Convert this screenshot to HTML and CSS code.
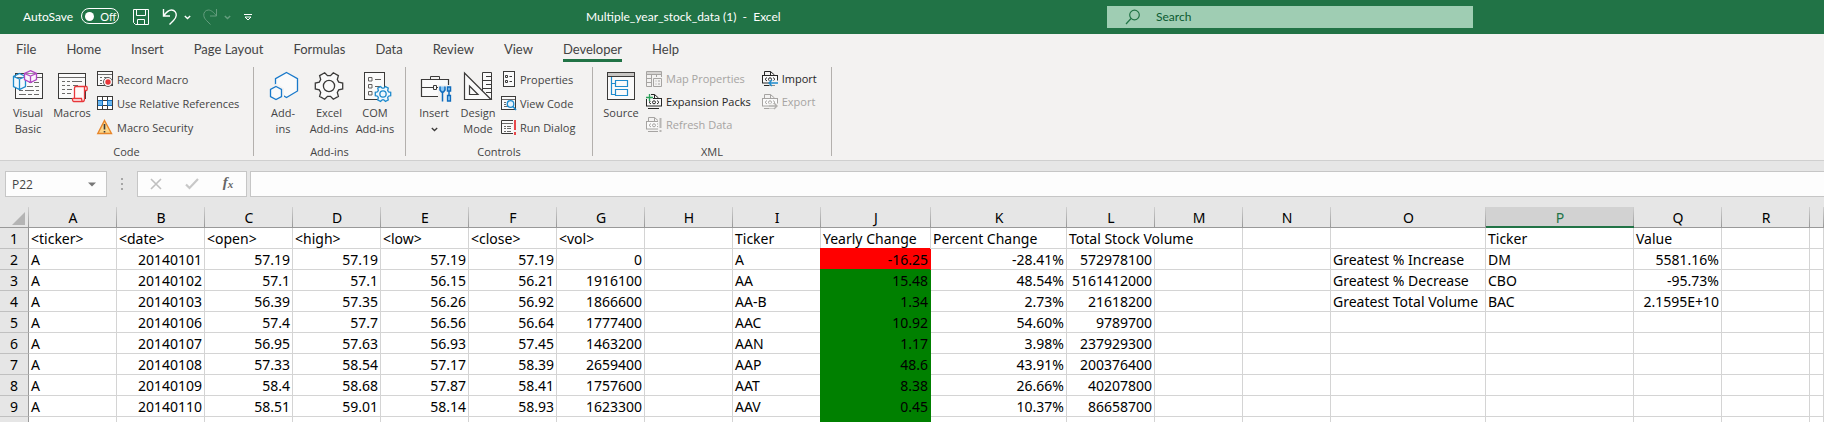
FILE: index.html
```html
<!DOCTYPE html>
<html lang="en">
<head>
<meta charset="utf-8">
<title>Multiple_year_stock_data (1) - Excel</title>
<link rel="stylesheet" href="styles.css">
</head>
<body>
<svg class="defs" aria-hidden="true">
  <symbol id="gear" viewBox="0 0 32 32">
    <path d="M25.7 12.1L29.7 13.1V18.9L25.7 19.9L24.3 22.5L25.4 26.4L20.3 29.3L17.5 26.4H14.5L11.7 29.3L6.6 26.4L7.7 22.5L6.3 19.9L2.3 18.9V13.1L6.3 12.1L7.7 9.5L6.6 5.6L11.7 2.7L14.5 5.6H17.5L20.3 2.7L25.4 5.6L24.3 9.5Z" vector-effect="non-scaling-stroke"/>
    <circle cx="16" cy="16" r="5.6" vector-effect="non-scaling-stroke"/>
  </symbol>
  <symbol id="xmlfile" viewBox="0 0 16 16">
    <path d="M2.5 4V.5H8.500L12.500 4M8.500 .5V4M2 14.500H13" stroke="currentColor" fill="none"/>
    <rect x=".5" y="4.500" width="15" height="7.500" fill="#fafafa" stroke="currentColor"/>
    <path d="M5 6.500L3 8.300L5 10M11 6.500L13 8.300L11 10" stroke="currentColor" fill="none"/>
    <circle cx="8" cy="8.300" r="1.500" stroke="currentColor" fill="none"/>
  </symbol>
</svg>

<header class="titlebar">
  <div class="quick">
    <label class="autosave">AutoSave
      <span class="switch"><input type="checkbox" class="switch-input"><span class="knob"></span>Off</span>
    </label>
    <button class="qbtn save" aria-label="Save"><svg width="16" height="16" viewBox="0 0 16 16"><path d="M.5.5H15.500V15.500H2.500L.5 13.500ZM3.500.5V6.500H12.500V.5M4.500 15.500V10.500H11.500V15.500"/></svg></button>
    <button class="qbtn undo" aria-label="Undo"><svg width="16" height="18" viewBox="0 0 16 18"><path class="bold" d="M1.500 1V8H8M1.500 8C4 4.500 7 2 9.500 2C13 2 14.500 5 14.200 7.500C14 9.500 13 11 11.500 12.500L7.500 16.500"/></svg></button>
    <button class="qbtn undo-more" aria-label="Undo list"><svg width="7" height="5" viewBox="0 0 7 5"><path class="bold" d="M.8 1L3.500 3.500L6.200 1"/></svg></button>
    <button class="qbtn redo dim" aria-label="Redo" disabled><svg width="16" height="18" viewBox="0 0 16 18"><path d="M14.500 1V8H8M14.500 8C12 4.500 9 2 6.500 2C3 2 1.500 5 1.800 7.500C2 9.500 3 11 4.500 12.500L8.500 16.500"/></svg></button>
    <button class="qbtn redo-more dim" aria-label="Redo list" disabled><svg width="7" height="5" viewBox="0 0 7 5"><path class="bold" d="M.8 1L3.500 3.500L6.200 1"/></svg></button>
    <button class="qbtn customize" aria-label="Customize toolbar"><svg width="8" height="7" viewBox="0 0 8 7"><path d="M0 .5H8M1 3L4 6L7 3Z"/></svg></button>
  </div>
  <div class="doc-title">Multiple_year_stock_data (1)&nbsp; -&nbsp; Excel</div>
  <label class="search"><svg width="16" height="16" viewBox="0 0 16 16"><circle cx="9.500" cy="6" r="4.800"/><path d="M6 9.500L1 15"/></svg><input type="text" class="search-input" placeholder="Search" aria-label="Search"></label>
</header>

<nav class="tabs">
  <button class="tab">File</button><button class="tab">Home</button><button class="tab">Insert</button><button class="tab">Page Layout</button><button class="tab">Formulas</button><button class="tab">Data</button><button class="tab">Review</button><button class="tab">View</button><button class="tab active">Developer</button><button class="tab">Help</button>
</nav>

<div class="ribbon">
  <section class="group code">
    <div class="tools">
      <button class="big"><svg width="32" height="32" viewBox="0 0 32 32"><rect x="3.500" y="3.500" width="27" height="25" fill="#fafafa" stroke="#3b3a39"/><path d="M4 7.500H30M17 12.500H20M22 12.500H27M15 16.500H21M23 16.500H27M7 20.500H11M13 20.500H22M24 20.500H27M7 24.500H14M16 24.500H20M22 24.500H27" stroke="#6b6a69"/><path d="M7.500 3.500L13.500 6.500V16.500L7.500 19.500L1.500 16.500V6.500ZM1.500 6.500L7.500 9L13.500 6.500M7.500 9V19" stroke="#1e8bcd" fill="#f3f9fd" stroke-width="1.300"/><path d="M18.500 .7L24.500 3.500V9.500L18.500 12.500L12.500 9.500V3.500ZM12.500 3.500L18.500 6L24.500 3.500M18.500 6V12" stroke="#b146c2" fill="#fbf3fc" stroke-width="1.300"/></svg><span>Visual<br>Basic</span></button>
      <button class="big"><svg width="32" height="32" viewBox="0 0 32 32"><rect x="2.500" y="3.500" width="27" height="25" fill="#fafafa" stroke="#3b3a39"/><path d="M3 7.500H29M6 11.500H9M11 11.500H14M16 11.500H26M6 15.500H9M11 15.500H14M17 15.500H22M6 19.500H9M11 19.500H16M6 23.500H9M11 23.500H15" stroke="#6b6a69"/><path d="M18.500 28.500V18C18.500 17 19 16.500 20 16.500H30.500C31.500 16.500 31.500 20.500 30.500 20.500H28.500V28.500C28.500 30.500 28 31.500 27 31.500H17.500C16.500 31.500 16 28.500 17 28.500H25.500L26 31M28.500 20.500V17" stroke="#e8373a" fill="#fff8f8" stroke-width="1.300"/></svg><span>Macros</span></button>
      <div class="small-col">
        <button class="small"><svg width="16" height="16" viewBox="0 0 16 16"><rect x=".5" y=".5" width="15" height="14" fill="#fafafa" stroke="#3b3a39"/><path d="M1 3.500H15M3 6.500H5M7 6.500H12M3 9.500H5M3 12.500H5" stroke="#6b6a69"/><circle cx="11" cy="11" r="4.500" fill="#fff" stroke="#605e5c"/><circle cx="11" cy="11" r="2.700" fill="#e8373a"/></svg>Record Macro</button>
        <button class="small"><svg width="16" height="16" viewBox="0 0 16 16"><rect x=".5" y="1.500" width="15" height="13" fill="#fff" stroke="#3b3a39"/><path d="M1 6H5V10H1ZM11 6H15V10H11Z" fill="#6cb8f0"/><path d="M1 5.500H15M1 10.500H15M5.500 2V14M10.500 2V14" fill="none" stroke="#3b3a39"/><path d="M1 5.500H5.500V10.500H1M15 5.500H10.500V10.500H15" fill="none" stroke="#0f6cbd"/></svg>Use Relative References</button>
        <button class="small"><svg width="16" height="16" viewBox="0 0 16 16"><path d="M7.500 1.500L14.500 14.500H.8Z" fill="#fbd68a" stroke="#e8862a" stroke-width="1.400"/><path d="M7.500 5V10.500M7.500 12V13.500" stroke="#3b3a39" stroke-width="1.600"/></svg>Macro Security</button>
      </div>
    </div>
    <h2 class="group-name">Code</h2>
  </section>

  <section class="group addins">
    <div class="tools">
      <button class="big"><svg width="32" height="32" viewBox="0 0 32 32"><path d="M19.500 2.500L30.500 8.700V21L19.500 27.500L8.500 21V8.700Z" fill="#fafafa" stroke="#1979ca" stroke-width="1.300"/><path d="M9 16L15 19.500V26.500L9 30L3 26.500V19.500Z" fill="#fafafa" stroke="#f3f2f1" stroke-width="4"/><path d="M9 16.500L14.500 19.500V26.500L9 29.500L3.500 26.500V19.500Z" fill="#fafafa" stroke="#1979ca" stroke-width="1.300"/></svg><span>Add-<br>ins</span></button>
      <button class="big"><svg width="32" height="32" viewBox="0 0 32 32" fill="#fafafa" stroke="#3b3a39" stroke-width="1.300"><use href="#gear" width="32" height="32"/></svg><span>Excel<br>Add-ins</span></button>
      <button class="big"><svg width="32" height="32" viewBox="0 0 32 32"><rect x="5.500" y="2.500" width="20" height="27" fill="#fafafa" stroke="#3b3a39"/><path d="M9.500 7.500H13V11H9.500ZM9.500 14.500H13V18H9.500ZM9.500 21.500H13V25H9.500ZM16 9.500H22M16 16.500H21" fill="none" stroke="#605e5c"/><svg x="15" y="15" width="18" height="18" viewBox="0 0 18 18" fill="#eef7fd" stroke="#1e8bcd" stroke-width="1.300"><use href="#gear" width="18" height="18"/></svg></svg><span>COM<br>Add-ins</span></button>
    </div>
    <h2 class="group-name">Add-ins</h2>
  </section>

  <section class="group controls">
    <div class="tools">
      <button class="big"><svg width="32" height="32" viewBox="0 0 32 32"><path d="M3.500 9.500H30.500V26.500H3.500Z" fill="#fafafa" stroke="#3b3a39" stroke-width="1.200"/><path d="M12.500 9V6.500H21.500V9M4 17.500H15M18 17.500H22M15.500 15.500H18.500V19.500H15.500Z" fill="none" stroke="#3b3a39"/><path d="M20 15H34V32H20Z" fill="#f3f2f1"/><path d="M22 16.500V20L23.500 22H25.500L27 20V16.500M24.500 21.500V31.500M29.500 17H32.500V21H29.500ZM31 21V25" stroke="#0f6cbd" fill="#8cc8f5" stroke-width="1.500"/><path d="M29.500 25.500H32.500V31H29.500Z" fill="#8cc8f5" stroke="#0f6cbd" stroke-width="1.300"/></svg><span>Insert</span><svg class="more" width="7" height="5" viewBox="0 0 7 5"><path d="M.8 1L3.500 3.500L6.200 1" fill="none" stroke="#3b3a39" stroke-width="1.300"/></svg></button>
      <button class="big"><svg width="32" height="32" viewBox="0 0 32 32"><path d="M20.500 2.500H29.500V29.500H20.500ZM24 6.500H29M21 10.500H29M24 14.500H29M21 18.500H29M24 22.500H29" fill="#fafafa" stroke="#3b3a39"/><path d="M2.500 3V29.500H29ZM7.500 16V24.500H16Z" fill="#fafafa" stroke="#3b3a39" stroke-width="1.200"/></svg><span>Design<br>Mode</span></button>
      <div class="small-col">
        <button class="small"><svg width="16" height="16" viewBox="0 0 16 16"><rect x="3.500" y=".5" width="11" height="15" fill="#fafafa" stroke="#3b3a39"/><path d="M5.500 4.500H7.500V6.500H5.500ZM5.500 9.500H7.500V11.500H5.500ZM9.500 5.500H12M9.500 10.500H12" fill="none" stroke="#3b3a39"/></svg>Properties</button>
        <button class="small"><svg width="16" height="16" viewBox="0 0 16 16"><rect x="1.500" y="1.500" width="14" height="13" fill="#fafafa" stroke="#3b3a39"/><path d="M2 4.500H15M4 7.500H6M4 9.500H6M4 11.500H8" stroke="#6b6a69"/><circle cx="10.500" cy="9" r="3.300" fill="#e6f3fc" stroke="#1e8bcd" stroke-width="1.300"/><path d="M13 11.500L16 15" stroke="#1e8bcd" stroke-width="1.600"/></svg>View Code</button>
        <button class="small"><svg width="16" height="16" viewBox="0 0 16 16"><path d="M13 1.500H1.500V14.500H13" fill="#fafafa" stroke="#3b3a39"/><path d="M2 4.500H13M4 7.500H6M7 7.500H11M4 9.500H6M7 9.500H11M4 12.500H6M7 12.500H11" stroke="#6b6a69"/><path d="M15 1V11M15 13V16" stroke="#e8474a" stroke-width="2"/></svg>Run Dialog</button>
      </div>
    </div>
    <h2 class="group-name">Controls</h2>
  </section>

  <section class="group xml">
    <div class="tools">
      <button class="big"><svg width="32" height="32" viewBox="0 0 32 32"><rect x="2.500" y="2.500" width="27" height="27" fill="#fafafa" stroke="#3b3a39"/><path d="M3 3H29V6H3Z" fill="#c8c6c4"/><path d="M3 6.500H29" stroke="#3b3a39"/><path d="M6.500 7V24.500H10.500M6.500 13.500H10.500M10.500 10.500H22.500V16.500H10.500ZM10.500 19.500H22.500V25.500H10.500Z" fill="none" stroke="#1e8bcd" stroke-width="1.200"/></svg><span>Source</span></button>
      <div class="small-col">
        <button class="small" disabled><svg width="16" height="16" viewBox="0 0 16 16" fill="none" stroke="#a6a4a2"><path d="M.5.5H15.500V6M15.500 3.500H.5V15.500H6M.5.5V4M5.500 4V15M10.500 4V6M1 7.500H6M1 11.500H6"/><path d="M1 1H15V3H1Z" fill="#d5d3d1" stroke="none"/><path d="M7.500 7.500H15.500V15.500H7.500ZM9.500 10H10.500M9.500 13H10.500M12 10H14M12 13H14"/></svg>Map Properties</button>
        <button class="small strong"><svg width="16" height="16" viewBox="0 0 16 16"><use href="#xmlfile" width="16" height="16"/><path d="M0 3.500H7M3.500 0V7" stroke="#f3f2f1" stroke-width="3"/><path d="M0 3.500H7M3.500 0V7" stroke="#2ca05a" stroke-width="1.300"/></svg>Expansion Packs</button>
        <button class="small" disabled><svg width="16" height="16" viewBox="0 0 16 16"><use href="#xmlfile" width="16" height="16"/><path d="M14 0V16" stroke="#f3f2f1" stroke-width="4"/><path d="M14.500 1V11M14.500 13V15" stroke="#b8b6b4" stroke-width="2"/></svg>Refresh Data</button>
      </div>
      <div class="small-col">
        <button class="small strong"><svg width="16" height="16" viewBox="0 0 16 16"><use href="#xmlfile" width="16" height="16"/><path d="M7 12H16" stroke="#f3f2f1" stroke-width="5"/><path d="M16 12H7M10 9L7 12L10 15" fill="none" stroke="#1e8bcd" stroke-width="1.400"/></svg>Import</button>
        <button class="small" disabled><svg width="16" height="16" viewBox="0 0 16 16"><use href="#xmlfile" width="16" height="16"/><path d="M7 12H16" stroke="#f3f2f1" stroke-width="5"/><path d="M7 12H15M12 9L15 12L12 15" fill="none" stroke="#b0aeac" stroke-width="1.400"/></svg>Export</button>
      </div>
    </div>
    <h2 class="group-name">XML</h2>
  </section>
</div>

<div class="formula-bar">
  <div class="namebox"><input type="text" class="name-input" value="P22" aria-label="Name box"><button class="name-drop" aria-label="Name list"><svg width="8" height="5" viewBox="0 0 8 5"><path d="M0 .5H8L4 4.500Z" fill="#777"/></svg></button></div>
  <svg class="grip" width="2" height="12" viewBox="0 0 2 12"><path d="M0 1H2M0 6H2M0 11H2" stroke="#a6a6a6" stroke-width="2"/></svg>
  <div class="fx">
    <button aria-label="Cancel"><svg width="12" height="12" viewBox="0 0 12 12"><path d="M1 1L11 11M11 1L1 11" stroke="#c0c0c0" stroke-width="1.600"/></svg></button>
    <button aria-label="Enter"><svg width="14" height="12" viewBox="0 0 14 12"><path d="M1 6.500L4.500 10L13 1" fill="none" stroke="#c8c8c8" stroke-width="2.200"/></svg></button>
    <button class="fx-label" aria-label="Insert function"><i>f</i><i class="sub">x</i></button>
  </div>
  <input type="text" class="formula" aria-label="Formula">
</div>

<main class="sheet">
<table>
<colgroup><col class="c-row"><col class="c" span="9"><col class="c-j"><col class="c-k"><col class="c" span="3"><col class="c-o"><col class="c-p"><col class="c" span="2"><col></colgroup>
<thead>
<tr><th class="corner"><svg width="13" height="13" viewBox="0 0 13 13"><path d="M13 0V13H0Z" fill="#b4b4b4"/></svg></th><th>A</th><th>B</th><th>C</th><th>D</th><th>E</th><th>F</th><th>G</th><th>H</th><th>I</th><th>J</th><th>K</th><th>L</th><th>M</th><th>N</th><th>O</th><th class="current">P</th><th>Q</th><th>R</th><th></th></tr>
</thead>
<tbody>
<tr><th>1</th><td>&lt;ticker&gt;</td><td>&lt;date&gt;</td><td>&lt;open&gt;</td><td>&lt;high&gt;</td><td>&lt;low&gt;</td><td>&lt;close&gt;</td><td>&lt;vol&gt;</td><td></td><td>Ticker</td><td>Yearly Change</td><td>Percent Change</td><td colspan="2">Total Stock Volume</td><td></td><td></td><td>Ticker</td><td>Value</td><td></td><td></td></tr>
<tr><th>2</th><td>A</td><td class="n">20140101</td><td class="n">57.19</td><td class="n">57.19</td><td class="n">57.19</td><td class="n">57.19</td><td class="n">0</td><td></td><td>A</td><td class="n down">-16.25</td><td class="n">-28.41%</td><td class="n">572978100</td><td></td><td></td><td>Greatest % Increase</td><td>DM</td><td class="n">5581.16%</td><td></td><td></td></tr>
<tr><th>3</th><td>A</td><td class="n">20140102</td><td class="n">57.1</td><td class="n">57.1</td><td class="n">56.15</td><td class="n">56.21</td><td class="n">1916100</td><td></td><td>AA</td><td class="n up">15.48</td><td class="n">48.54%</td><td class="n">5161412000</td><td></td><td></td><td>Greatest % Decrease</td><td>CBO</td><td class="n">-95.73%</td><td></td><td></td></tr>
<tr><th>4</th><td>A</td><td class="n">20140103</td><td class="n">56.39</td><td class="n">57.35</td><td class="n">56.26</td><td class="n">56.92</td><td class="n">1866600</td><td></td><td>AA-B</td><td class="n up">1.34</td><td class="n">2.73%</td><td class="n">21618200</td><td></td><td></td><td>Greatest Total Volume</td><td>BAC</td><td class="n">2.1595E+10</td><td></td><td></td></tr>
<tr><th>5</th><td>A</td><td class="n">20140106</td><td class="n">57.4</td><td class="n">57.7</td><td class="n">56.56</td><td class="n">56.64</td><td class="n">1777400</td><td></td><td>AAC</td><td class="n up">10.92</td><td class="n">54.60%</td><td class="n">9789700</td><td></td><td></td><td></td><td></td><td></td><td></td><td></td></tr>
<tr><th>6</th><td>A</td><td class="n">20140107</td><td class="n">56.95</td><td class="n">57.63</td><td class="n">56.93</td><td class="n">57.45</td><td class="n">1463200</td><td></td><td>AAN</td><td class="n up">1.17</td><td class="n">3.98%</td><td class="n">237929300</td><td></td><td></td><td></td><td></td><td></td><td></td><td></td></tr>
<tr><th>7</th><td>A</td><td class="n">20140108</td><td class="n">57.33</td><td class="n">58.54</td><td class="n">57.17</td><td class="n">58.39</td><td class="n">2659400</td><td></td><td>AAP</td><td class="n up">48.6</td><td class="n">43.91%</td><td class="n">200376400</td><td></td><td></td><td></td><td></td><td></td><td></td><td></td></tr>
<tr><th>8</th><td>A</td><td class="n">20140109</td><td class="n">58.4</td><td class="n">58.68</td><td class="n">57.87</td><td class="n">58.41</td><td class="n">1757600</td><td></td><td>AAT</td><td class="n up">8.38</td><td class="n">26.66%</td><td class="n">40207800</td><td></td><td></td><td></td><td></td><td></td><td></td><td></td></tr>
<tr><th>9</th><td>A</td><td class="n">20140110</td><td class="n">58.51</td><td class="n">59.01</td><td class="n">58.14</td><td class="n">58.93</td><td class="n">1623300</td><td></td><td>AAV</td><td class="n up">0.45</td><td class="n">10.37%</td><td class="n">86658700</td><td></td><td></td><td></td><td></td><td></td><td></td><td></td></tr>
<tr><th></th><td></td><td></td><td></td><td></td><td></td><td></td><td></td><td></td><td></td><td class="up"></td><td></td><td></td><td></td><td></td><td></td><td></td><td></td><td></td><td></td></tr>
</tbody>
</table>
</main>
</body>
</html>
```
FILE: styles.css
```css
* { box-sizing: border-box; }
body {
  margin: 0;
  height: 100vh;
  overflow: hidden;
  display: flex;
  flex-direction: column;
  background: #e6e6e6;
  color: #444;
  font: 11px "Open Sans", "Noto Sans", sans-serif;
}
button, input { font: inherit; color: inherit; border: 0; padding: 0; margin: 0; background: none; }
svg { display: block; flex: none; overflow: visible; }
.defs { position: absolute; width: 0; height: 0; }

/* Title bar */
.titlebar {
  flex: none;
  display: grid;
  grid-template-columns: 586fr 521fr 366fr 351fr;
  align-items: center;
  height: 34px;
  background: #217346;
  color: #fff;
  font: 12px Lato, sans-serif;
}
.quick { display: flex; align-items: center; padding-left: 23px; }
.autosave { display: flex; align-items: center; gap: 8px; padding-bottom: 2px; }
.switch {
  display: flex;
  align-items: center;
  gap: 6px;
  width: 38px;
  height: 16px;
  padding-left: 3px;
  border: 1px solid #fff;
  border-radius: 8px;
  font-size: 11px;
}
.switch-input { position: absolute; opacity: 0; width: 0; height: 0; }
.knob { width: 9px; height: 9px; border-radius: 50%; background: #fff; }
.qbtn path { fill: none; stroke: #fff; }
.qbtn .bold { stroke-width: 1.4px; }
.dim { opacity: .3; }
.save { margin-left: 14px; }
.undo { margin-left: 13px; }
.undo-more, .redo-more { margin-left: 6px; }
.redo { margin-left: 11px; }
.customize { margin-left: 13px; }
.doc-title { padding-bottom: 2px; white-space: nowrap; }
.search {
  display: flex;
  align-items: center;
  gap: 15px;
  height: 22px;
  padding-left: 18px;
  background: #9fcdb3;
  color: #0b5a31;
}
.search svg { fill: none; stroke: #217346; stroke-width: 1.2px; }
.search-input { flex: 1; min-width: 0; padding-bottom: 2px; }
.search-input::placeholder { color: #0b5a31; opacity: 1; }

/* Ribbon tabs */
.tabs {
  flex: none;
  display: flex;
  gap: 30px;
  padding: 6px 16px 5px;
  background: #f3f2f1;
  font: 13px/18px Lato, sans-serif;
}
.tab { height: 22px; padding-bottom: 1px; border-bottom: 3px solid transparent; white-space: nowrap; }
.tab.active { border-color: #217346; }

/* Ribbon */
.ribbon { flex: none; display: flex; padding-bottom: 4px; background: #f3f2f1; }
.group { display: flex; flex-direction: column; height: 89px; border-right: 1px solid #b3b0ad; }
.code { width: 254px; }
.addins { width: 152px; }
.controls { width: 187px; }
.xml { width: 239px; }
.tools { flex: 1; display: flex; align-items: flex-start; padding-left: 6px; }
.group-name { margin: 0; font-size: 11px; font-weight: 400; line-height: 8px; text-align: center; }
.big {
  display: flex;
  flex-direction: column;
  align-items: center;
  gap: 3px;
  width: 44px;
  padding-top: 3px;
  line-height: 16px;
  white-space: nowrap;
}
.addins .big { width: 46px; }
.more { margin-top: 3px; }
.small-col { display: flex; flex-direction: column; align-items: flex-start; margin-left: 3px; }
.controls .small-col { margin-left: 0; }
.small { display: flex; align-items: center; gap: 4px; height: 24px; white-space: nowrap; }
.xml .small { height: 23px; }
.small-col + .small-col { margin-left: 11px; }
.strong { color: #262626; }
.small:disabled { color: #a6a4a2; }

/* Formula bar */
.formula-bar {
  flex: none;
  display: flex;
  align-items: center;
  padding: 10px 0 10px 5px;
  border-top: 1px solid #cfcfcf;
}
.namebox, .fx, .formula { height: 26px; border: 1px solid #c6c6c6; background: #fdfdfd; }
.namebox { display: flex; width: 102px; font-size: 12px; }
.name-input { flex: 1; min-width: 0; padding-left: 6px; }
.name-drop { width: 18px; }
.grip { margin: 0 14px; }
.fx { display: flex; justify-content: space-around; align-items: center; width: 110px; margin-right: 3px; }
.fx button { display: flex; width: 28px; justify-content: center; }
.fx .fx-label { font: 700 15px/18px "Liberation Serif", serif; color: #666; }
.sub { font-size: 11px; line-height: 22px; }
.formula { flex: 1; min-width: 0; border-right: 0; padding: 0 6px; font-size: 14px; }

/* Worksheet */
.sheet { flex: 1; min-height: 0; overflow: hidden; }
table {
  width: 100%;
  table-layout: fixed;
  border-collapse: separate;
  border-spacing: 0;
  font: 14px/18px "Noto Sans", sans-serif;
  color: #000;
}
.c-row { width: 29px; }
.c { width: 88px; }
.c-j { width: 110px; }
.c-k { width: 136px; }
.c-o { width: 155px; }
.c-p { width: 148px; }
th, td { height: 21px; padding: 2px 2px 0; white-space: nowrap; }
td { border-right: 1px solid #d4d4d4; border-bottom: 1px solid #d4d4d4; background: #fff; text-align: left; }
th { font-weight: 400; background: #e6e6e6; }
thead th {
  border-bottom: 1px solid #999;
  background: linear-gradient(#d0d0d0, #999) right / 1px 100% no-repeat #e6e6e6;
}
tbody th { border-right: 1px solid #999; border-bottom: 1px solid #c0c0c0; }
thead .current { border-bottom: 2px solid #217346; line-height: 17px; background-color: #d2d2d2; color: #217346; }
.corner svg { margin-left: 10px; }
.n { text-align: right; }
.down { background: #f00; border-color: #f00; box-shadow: -1px -1px #f00; }
.up { background: #008000; border-color: #008000; box-shadow: -1px -1px #008000; }
```
